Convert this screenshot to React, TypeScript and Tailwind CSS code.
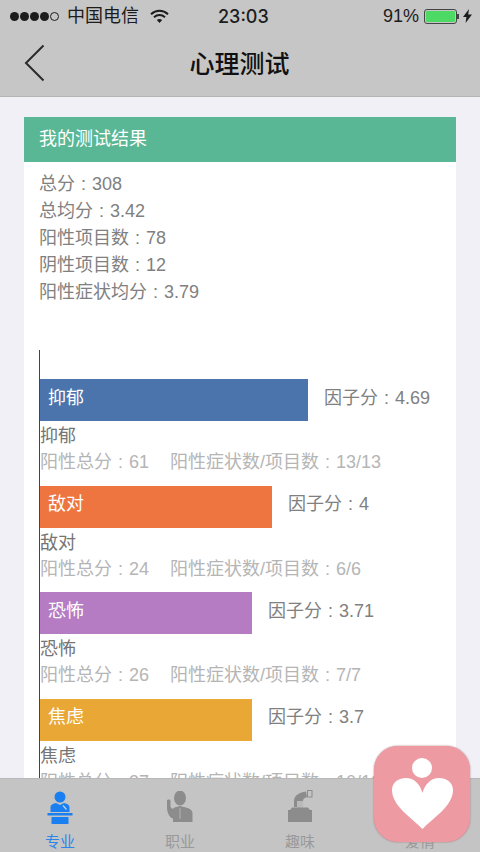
const fontStack = {
  fontFamily: '"Liberation Sans", "Noto Sans CJK SC", sans-serif',
};

type Factor = {
  name: string;
  score: string;
  total: number;
  count: string;
  barClass: string;
};

const factors: Factor[] = [
  { name: "抑郁", score: "4.69", total: 61, count: "13/13", barClass: "w-[268px] bg-[#4a74ab]" },
  { name: "敌对", score: "4", total: 24, count: "6/6", barClass: "w-[232px] bg-[#ee753f]" },
  { name: "恐怖", score: "3.71", total: 26, count: "7/7", barClass: "w-[212px] bg-[#b57cc4]" },
  { name: "焦虑", score: "3.7", total: 37, count: "10/10", barClass: "w-[212px] bg-[#e9a736]" },
];

const stats = [
  ["总分", "308"],
  ["总均分", "3.42"],
  ["阳性项目数", "78"],
  ["阴性项目数", "12"],
  ["阳性症状均分", "3.79"],
];

// 冒号居中
function Colon() {
  return <span className="inline-block w-[17px] text-center">:</span>;
}

function StatusBar() {
  return (
    <div className="flex items-center h-8 pl-[10px] pr-2 text-[#1c1c1c]">
      <div className="flex items-center gap-[1px] w-[50px]">
        {[0, 1, 2, 3].map((i) => (
          <span key={i} className="w-[9px] h-[9px] rounded-full bg-[#1c1c1c]" />
        ))}
        <span className="w-[9px] h-[9px] rounded-full border border-[#1c1c1c]" />
      </div>
      <span className="ml-[7px] text-[18px]">中国电信</span>
      <svg className="ml-[11px]" width="19" height="15" viewBox="0 0 19 15" fill="none" stroke="#1c1c1c" strokeWidth="2">
        <path d="M1 5.2C6 .6 13 .6 18 5.2" />
        <path d="M4 8.2c3.2-2.8 7.8-2.8 11 0" />
        <path d="M9.5 14 6.8 11c1.6-1.3 3.8-1.3 5.4 0L9.5 14Z" fill="#1c1c1c" stroke="none" />
      </svg>
      <span className="ml-[49px] text-[18px] font-medium font-['Inter']">23:03</span>
      <span className="ml-auto text-[18px]">91%</span>
      <div className="ml-[5px] flex items-center">
        <div className="w-[33px] h-[15px] border border-[#444] rounded-[3px] p-[1px]">
          <div className="w-full h-full bg-[#4cd964] rounded-[1px]" />
        </div>
        <div className="w-[2px] h-[5px] bg-[#444]" />
      </div>
      <svg className="ml-1" width="9" height="14" viewBox="0 0 9 14" fill="#1c1c1c">
        <path d="M6 0 0 8h3.4L2.6 14 9 5.6H5.2L6 0Z" />
      </svg>
    </div>
  );
}

function NavBar() {
  return (
    <div className="relative flex items-center justify-center h-[65px] pr-[1px] pt-[1px] border-b border-[#b4b4b4]">
      <svg className="absolute left-[23px] top-[12px]" width="24" height="38" viewBox="0 0 24 38" fill="none" stroke="#2a2a2a" strokeWidth="2">
        <path d="M20.5 1.5 3 19l17.5 17.5" />
      </svg>
      <span className="text-[25px] font-medium text-[#111]">心理测试</span>
    </div>
  );
}

function FactorRow({ factor }: { factor: Factor }) {
  return (
    <div className="mb-[10.5px]">
      <div className="flex items-center">
        <div className={`h-[42px] flex items-center pl-2 pb-1 text-white ${factor.barClass}`}>{factor.name}</div>
        <span className="ml-4 pb-1 text-[#808080]">
          因子分
          <Colon />
          {factor.score}
        </span>
      </div>
      <div className="h-[26px] leading-[30px] text-[#757575]">{factor.name}</div>
      <div className="h-[28px] leading-[30px] text-[#b5b5b5] whitespace-nowrap">
        <span className="mr-[21px]">
          阳性总分
          <Colon />
          {factor.total}
        </span>
        <span>
          阳性症状数/项目数
          <Colon />
          {factor.count}
        </span>
      </div>
    </div>
  );
}

function SpeakerIcon() {
  return (
    <svg width="26" height="34" viewBox="0 0 26 34" fill="#1a7ff0">
      <circle cx="13" cy="6" r="5.5" />
      <path d="M3.500 21v-4.500c0-2.600 2.500-3.800 5.500-4.500l4 2 4-2c3 .7 5.500 1.900 5.500 4.500V21h-19Z" />
      <path d="M16 14.500l3.500 4" stroke="#bcd6f2" strokeWidth="1.200" />
      <rect x="0.500" y="22" width="25" height="2.500" />
      <rect x="4.500" y="26" width="17" height="7" />
    </svg>
  );
}

function WorkerIcon() {
  return (
    <svg width="28" height="32" viewBox="0 0 28 32" fill="#8c8c8c">
      <ellipse cx="14" cy="7" rx="6" ry="7.500" />
      <path d="M1 9.500c0-1.500 3.500-1.500 3.500 0v6.500l2 2 2-1.500 5.500-1.500 6 1.500c3.500 1 6.500 2.500 6.500 6v8.500H7v-3.500c-3 0-6-6-6-10.500v-7Z" />
      <path d="M14 17v11" stroke="#b4b4b4" strokeWidth="1" />
    </svg>
  );
}

function BoxIcon() {
  return (
    <svg width="26" height="34" viewBox="0 0 26 34" fill="#8c8c8c">
      <path d="M7 18v-6C7 6 13 3.500 19 2.500L20 8c-3 .8-4 2.500-4 4H10v6H7Z" />
      <rect x="10" y="12" width="6" height="7" fill="#b9b9b9" />
      <rect x="20.500" y="1.500" width="4.500" height="6.500" fill="none" stroke="#8c8c8c" strokeWidth="1" />
      <path d="M3 21l2-2.500h16l2 2.500H3Z" />
      <rect x="1" y="21" width="24" height="12" />
    </svg>
  );
}

function TabBar() {
  return (
    <div className="grid grid-cols-4 h-[74px] shrink-0 bg-[#c4c4c4] border-t border-[#b8b8b8] text-[15px] text-[#999]">
      <div className="flex flex-col items-center pt-3">
        <div className="h-[42px]"><SpeakerIcon /></div>
        <span className="leading-[18px] text-[#2b86ea]">专业</span>
      </div>
      <div className="flex flex-col items-center pt-3">
        <div className="h-[42px]"><WorkerIcon /></div>
        <span className="leading-[18px]">职业</span>
      </div>
      <div className="flex flex-col items-center pt-[10px]">
        <div className="h-[44px]"><BoxIcon /></div>
        <span className="leading-[18px]">趣味</span>
      </div>
      <div className="flex flex-col items-center pt-3">
        <div className="h-[42px]" />
        <span className="leading-[18px]">爱情</span>
      </div>
    </div>
  );
}

export default function App() {
  return (
    <div className="relative flex flex-col w-[480px] h-[852px] overflow-hidden bg-[#f0f0f6]" style={fontStack}>
      <div className="shrink-0 bg-[#c6c6c6]">
        <StatusBar />
        <NavBar />
      </div>

      {/* 结果卡片 */}
      <div className="flex-1 min-h-0 overflow-hidden px-6 pt-5">
        <div className="bg-white text-[18px]">
          <div className="flex items-center h-[45px] px-[15px] bg-[#5ab795] text-white">我的测试结果</div>
          <div className="px-[15px] pt-[9px] text-[#808080]">
            {stats.map(([label, value]) => (
              <div key={label} className="h-[27px] leading-[27px]">
                {label}
                <Colon />
                {value}
              </div>
            ))}
          </div>
          <div className="ml-[15px] mt-[44px] pt-[29px] border-l border-[#444]">
            {factors.map((f) => (
              <FactorRow key={f.name} factor={f} />
            ))}
          </div>
        </div>
      </div>

      <TabBar />

      {/* 悬浮按钮 */}
      <div className="absolute right-[10px] bottom-[10px] w-24 h-24 rounded-[24px] bg-[#ee9aa2] shadow-[0_0_2px_#a87078]">
        <svg width="96" height="96" viewBox="0 0 96 96" fill="white">
          <circle cx="48" cy="22" r="10" />
          <path d="M48.500 83C38 72 18 60 18 44c0-8 7-12 14-12 8 0 14 6 16.500 15C51 38 57 32 65 32c7 0 14 4 14 12 0 16-20 28-30.500 39Z" />
        </svg>
      </div>
    </div>
  );
}
